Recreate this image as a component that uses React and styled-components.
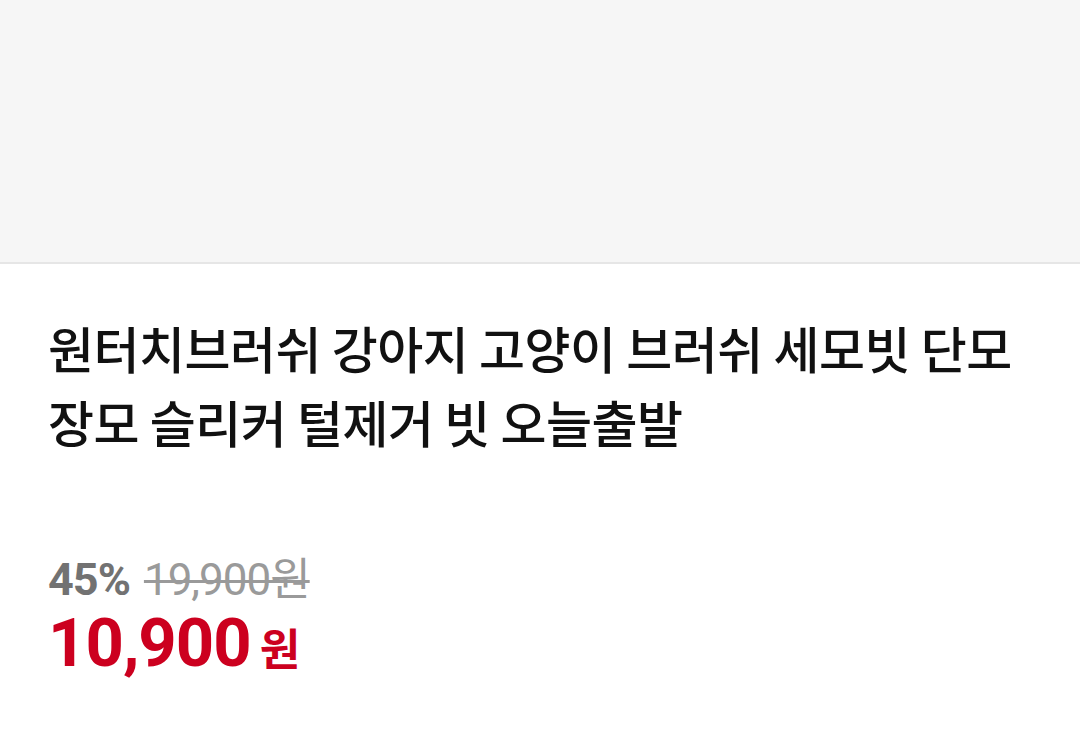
import styled, { createGlobalStyle } from "styled-components";

const Global = createGlobalStyle`
  html, body {
    margin: 0;
    padding: 0;
    background: #ffffff;
  }
  body {
    font-family: Roboto, "Noto Sans CJK KR", sans-serif;
  }
`;

const Page = styled.div`
  width: 1080px;
  height: 738px;
  overflow: hidden;
  display: flex;
  flex-direction: column;
`;

const ImageArea = styled.div`
  height: 262px;
  background: #f6f6f6;
  border-bottom: 2px solid #e6e6e6;
`;

const Info = styled.div`
  padding: 46px 48px 0;
  display: flex;
  flex-direction: column;
`;

const Title = styled.h1`
  margin: 0;
  font-family: "Noto Sans CJK KR", sans-serif;
  font-weight: 500;
  font-size: 50px;
  line-height: 74px;
  letter-spacing: -0.5px;
  color: #111111;
`;

const PriceBox = styled.div`
  margin-top: 97px;
  display: flex;
  flex-direction: column;
`;

const OldRow = styled.div`
  display: flex;
  align-items: baseline;
  gap: 14px;
  line-height: 50px;
`;

const Rate = styled.span`
  font-family: Roboto, "Noto Sans CJK KR", sans-serif;
  font-weight: 700;
  font-size: 45px;
  letter-spacing: -1px;
  color: #727272;
`;

const OldPrice = styled.span`
  font-family: Roboto, "Noto Sans CJK KR", sans-serif;
  font-size: 44px;
  letter-spacing: -1px;
  color: #9a9a9a;
  text-decoration: line-through;
  text-decoration-thickness: 3px;
`;

const NowRow = styled.div`
  display: flex;
  align-items: baseline;
  gap: 9px;
  line-height: 76px;
  color: #cc001f;
`;

const Amount = styled.span`
  font-family: Roboto, sans-serif;
  font-weight: 700;
  font-size: 67px;
  letter-spacing: -1px;
`;

const Unit = styled.span`
  font-family: "Noto Sans CJK KR", sans-serif;
  font-weight: 700;
  font-size: 44px;
`;

export default function App() {
  return (
    <Page>
      <Global />
      <ImageArea />
      <Info>
        <Title>
          원터치브러쉬 강아지 고양이 브러쉬 세모빗 단모
          <br />
          장모 슬리커 털제거 빗 오늘출발
        </Title>
        <PriceBox>
          <OldRow>
            <Rate>45%</Rate>
            <OldPrice>19,900원</OldPrice>
          </OldRow>
          <NowRow>
            <Amount>10,900</Amount>
            <Unit>원</Unit>
          </NowRow>
        </PriceBox>
      </Info>
    </Page>
  );
}
